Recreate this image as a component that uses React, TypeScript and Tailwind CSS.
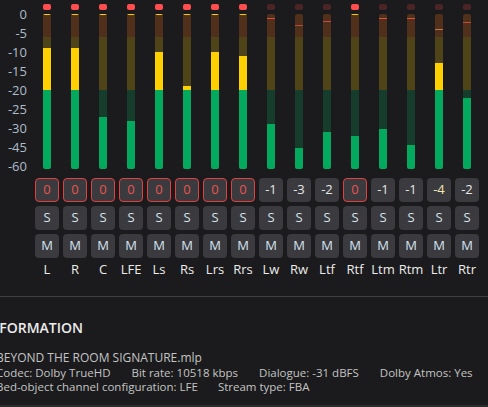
import React from 'react';

type Channel = {
  name: string;
  level: number; // px from bar top where the lit part begins
  value: string;
  clip?: boolean;
  peak?: { at: number; color: string };
};

const channels: Channel[] = [
  { name: 'L', level: 34, value: '0', clip: true },
  { name: 'R', level: 34, value: '0', clip: true },
  { name: 'C', level: 103, value: '0', clip: true },
  { name: 'LFE', level: 107, value: '0', clip: true },
  { name: 'Ls', level: 38, value: '0', clip: true },
  { name: 'Rs', level: 72, value: '0', clip: true },
  { name: 'Lrs', level: 38, value: '0', clip: true },
  { name: 'Rrs', level: 42, value: '0', clip: true },
  { name: 'Lw', level: 110, value: '-1', peak: { at: 4, color: '#e0483c' } },
  { name: 'Rw', level: 134, value: '-3', peak: { at: 11, color: '#b34a3b' } },
  { name: 'Ltf', level: 118, value: '-2', peak: { at: 7, color: '#c84a3e' } },
  { name: 'Rtf', level: 122, value: '0', clip: true },
  { name: 'Ltm', level: 115, value: '-1', peak: { at: 4, color: '#e0503c' } },
  { name: 'Rtm', level: 131, value: '-1', peak: { at: 4, color: '#e0503c' } },
  { name: 'Ltr', level: 49, value: '-4', peak: { at: 15, color: '#c0744e' } },
  { name: 'Rtr', level: 84, value: '-2', peak: { at: 8, color: '#c84a3e' } },
];

const scale = ['0', '-5', '-10', '-15', '-20', '-25', '-30', '-45', '-60'];

// bar zones in px from the top of a 155px bar
const zones = [
  { from: 0, to: 23, dim: '#50301a', lit: '#e0502a' },
  { from: 23, to: 76, dim: '#4f4418', lit: '#ffd000' },
  { from: 76, to: 155, dim: '#163d2c', lit: '#03a95c' },
];

const clamp = (v: number, a: number, b: number) => Math.min(Math.max(v, a), b);

function Meter({ ch }: { ch: Channel }) {
  const mark = ch.clip ? { at: 0, color: '#ffd000' } : ch.peak;
  return (
    <div className="flex h-[155px] w-[8px] flex-col overflow-hidden rounded-[2px]">
      {zones.map((z) => {
        const cut = clamp(ch.level, z.from, z.to);
        const dimH = cut - z.from;
        const litH = z.to - cut;
        const showMark = mark && mark.at >= z.from && mark.at < z.to && mark.at < cut;
        return (
          <React.Fragment key={z.from}>
            {dimH > 0 && (
              <div className="flex flex-col" style={{ height: dimH, background: z.dim }}>
                {showMark && (
                  <>
                    <div style={{ height: mark!.at - z.from }} />
                    <div className="h-px" style={{ background: mark!.color }} />
                  </>
                )}
              </div>
            )}
            {litH > 0 && <div style={{ height: litH, background: z.lit }} />}
          </React.Fragment>
        );
      })}
    </div>
  );
}

function Column({ ch }: { ch: Channel }) {
  const trim = ch.clip
    ? 'border border-[#e0413f] text-[#e8554e]'
    : ch.value === '-4'
      ? 'text-[#f2e6b2]'
      : 'text-[#e6e6e6]';
  return (
    <div className="flex w-[28px] flex-col items-center pt-[4px]">
      <div
        className={`h-[6px] w-[8px] rounded-[2px] ${ch.clip ? 'bg-[#ff4d4d]' : 'bg-[#4b2526]'}`}
      />
      <div className="mt-[4px]">
        <Meter ch={ch} />
      </div>
      <div className="mt-[9px] flex flex-col gap-[4px]">
        <div
          className={`flex h-[24px] w-[24px] items-center justify-center rounded-[4px] bg-[#3b3b3f] text-[13px] ${trim}`}
        >
          {ch.value}
        </div>
        <div className="flex h-[24px] w-[24px] items-center justify-center rounded-[4px] bg-[#3b3b3f] text-[13px] text-[#d6e2ee]">
          S
        </div>
        <div className="flex h-[24px] w-[24px] items-center justify-center rounded-[4px] bg-[#3b3b3f] text-[13px] text-[#d6e2ee]">
          M
        </div>
      </div>
      <div className="mt-[3px] whitespace-nowrap text-[13px] leading-[16px] text-[#ececec]">
        {ch.name}
      </div>
    </div>
  );
}

export default function App() {
  return (
    <div
      className="relative h-[407px] w-[488px] overflow-hidden bg-[#1b1b1d]"
      style={{ fontFamily: '"Open Sans", "Noto Sans", sans-serif' }}
    >
      <div className="flex h-[296px]">
        {/* dB scale */}
        <div className="flex w-[33px] flex-col items-end pr-[6px] pt-[5px]">
          {scale.map((s) => (
            <div key={s} className="h-[19px] text-[13px] leading-[19px] text-[#aebccb]">
              {s}
            </div>
          ))}
        </div>
        {channels.map((ch) => (
          <Column key={ch.name} ch={ch} />
        ))}
      </div>

      <div className="h-px bg-[#3e3e40]" />

      {/* stream info */}
      <div className="-ml-[4px] flex flex-col whitespace-nowrap text-[#c4c4c4]">
        <div className="-ml-[12px] mt-[22px] text-[14px] font-semibold leading-[18px] text-[#ececec]">
          INFORMATION
        </div>
        <div className="mt-[13px] text-[12px] leading-[16px]">BEYOND THE ROOM SIGNATURE.mlp</div>
        <div className="-mt-[1px] flex gap-[21px] text-[11.5px] leading-[16px]">
          <span className="shrink-0">Codec: Dolby TrueHD</span>
          <span className="shrink-0">Bit rate: 10518 kbps</span>
          <span className="shrink-0">Dialogue: -31 dBFS</span>
          <span className="shrink-0">Dolby Atmos: Yes</span>
        </div>
        <div className="-mt-[2px] flex gap-[20px] text-[11.5px] leading-[16px]">
          <span className="shrink-0">Bed-object channel configuration: LFE</span>
          <span className="shrink-0">Stream type: FBA</span>
        </div>
      </div>

      <div className="absolute bottom-0 left-0 h-[2px] w-full bg-[#2c2c2e]" />
    </div>
  );
}
